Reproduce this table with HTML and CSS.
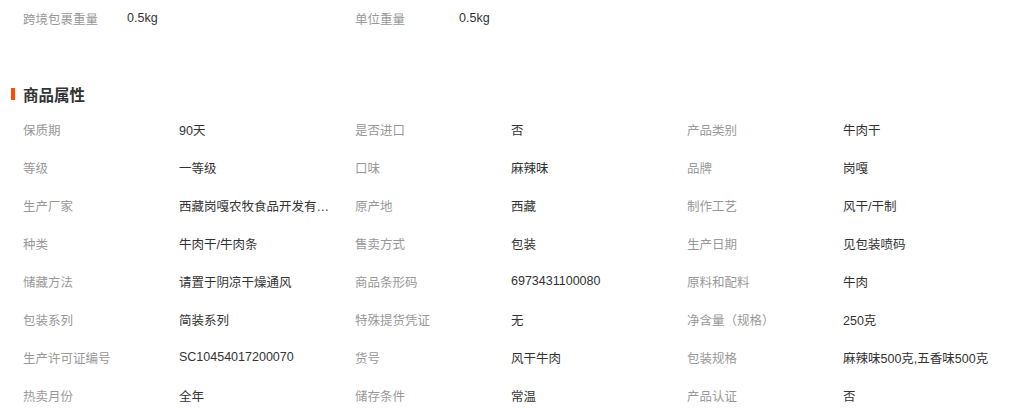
FILE: index.html
```html
<!DOCTYPE html>
<html lang="zh-CN">
<head>
<meta charset="utf-8">
<title>商品属性</title>
<link rel="stylesheet" href="styles.css">
</head>
<body>
<div class="weight-row">
  <span class="w-label">跨境包裹重量</span><span class="w-value">0.5kg</span>
  <span class="w-label">单位重量</span><span class="w-value">0.5kg</span>
</div>
<h2 class="section-title">商品属性</h2>
<div class="attr-grid">
  <span class="a-label">保质期</span><span class="a-value">90天</span>
  <span class="a-label">是否进口</span><span class="a-value">否</span>
  <span class="a-label">产品类别</span><span class="a-value">牛肉干</span>

  <span class="a-label">等级</span><span class="a-value">一等级</span>
  <span class="a-label">口味</span><span class="a-value">麻辣味</span>
  <span class="a-label">品牌</span><span class="a-value">岗嘎</span>

  <span class="a-label">生产厂家</span><span class="a-value">西藏岗嘎农牧食品开发有限公司</span>
  <span class="a-label">原产地</span><span class="a-value">西藏</span>
  <span class="a-label">制作工艺</span><span class="a-value">风干/干制</span>

  <span class="a-label">种类</span><span class="a-value">牛肉干/牛肉条</span>
  <span class="a-label">售卖方式</span><span class="a-value">包装</span>
  <span class="a-label">生产日期</span><span class="a-value">见包装喷码</span>

  <span class="a-label">储藏方法</span><span class="a-value">请置于阴凉干燥通风</span>
  <span class="a-label">商品条形码</span><span class="a-value">6973431100080</span>
  <span class="a-label">原料和配料</span><span class="a-value">牛肉</span>

  <span class="a-label">包装系列</span><span class="a-value">简装系列</span>
  <span class="a-label">特殊提货凭证</span><span class="a-value">无</span>
  <span class="a-label">净含量（规格）</span><span class="a-value">250克</span>

  <span class="a-label">生产许可证编号</span><span class="a-value">SC10454017200070</span>
  <span class="a-label">货号</span><span class="a-value">风干牛肉</span>
  <span class="a-label">包装规格</span><span class="a-value">麻辣味500克,五香味500克</span>

  <span class="a-label">热卖月份</span><span class="a-value">全年</span>
  <span class="a-label">储存条件</span><span class="a-value">常温</span>
  <span class="a-label">产品认证</span><span class="a-value">否</span>
</div>
</body>
</html>
```
FILE: styles.css
```css
html, body {
  margin: 0;
  padding: 0;
  background: #fff;
}
body {
  font-family: "Liberation Sans", "Noto Sans CJK SC", sans-serif;
  font-size: 12.5px;
  color: #333;
  width: 1023px;
  overflow: hidden;
}
.weight-row {
  display: grid;
  grid-template-columns: 104px 228px 104px 228px;
  align-items: center;
  height: 36px;
  padding-left: 23px;
}
.w-label {
  color: #999;
  white-space: nowrap;
}
.w-value {
  color: #333;
}
.section-title {
  margin: 46px 0 4px 11px;
  height: 24px;
  display: flex;
  align-items: center;
  gap: 8px;
  font-size: 15.5px;
  font-weight: bold;
  color: #333;
}
.section-title::before {
  content: "";
  width: 4px;
  height: 12px;
  background: #ff4a00;
}
.attr-grid {
  display: grid;
  grid-template-columns: 156px 176px 156px 176px 156px 176px;
  grid-auto-rows: 38px;
  align-items: center;
  padding-left: 23px;
}
.a-label {
  color: #999;
  white-space: nowrap;
}
.a-value {
  color: #333;
  white-space: nowrap;
  overflow: hidden;
  text-overflow: ellipsis;
  max-width: 156px;
}
```
